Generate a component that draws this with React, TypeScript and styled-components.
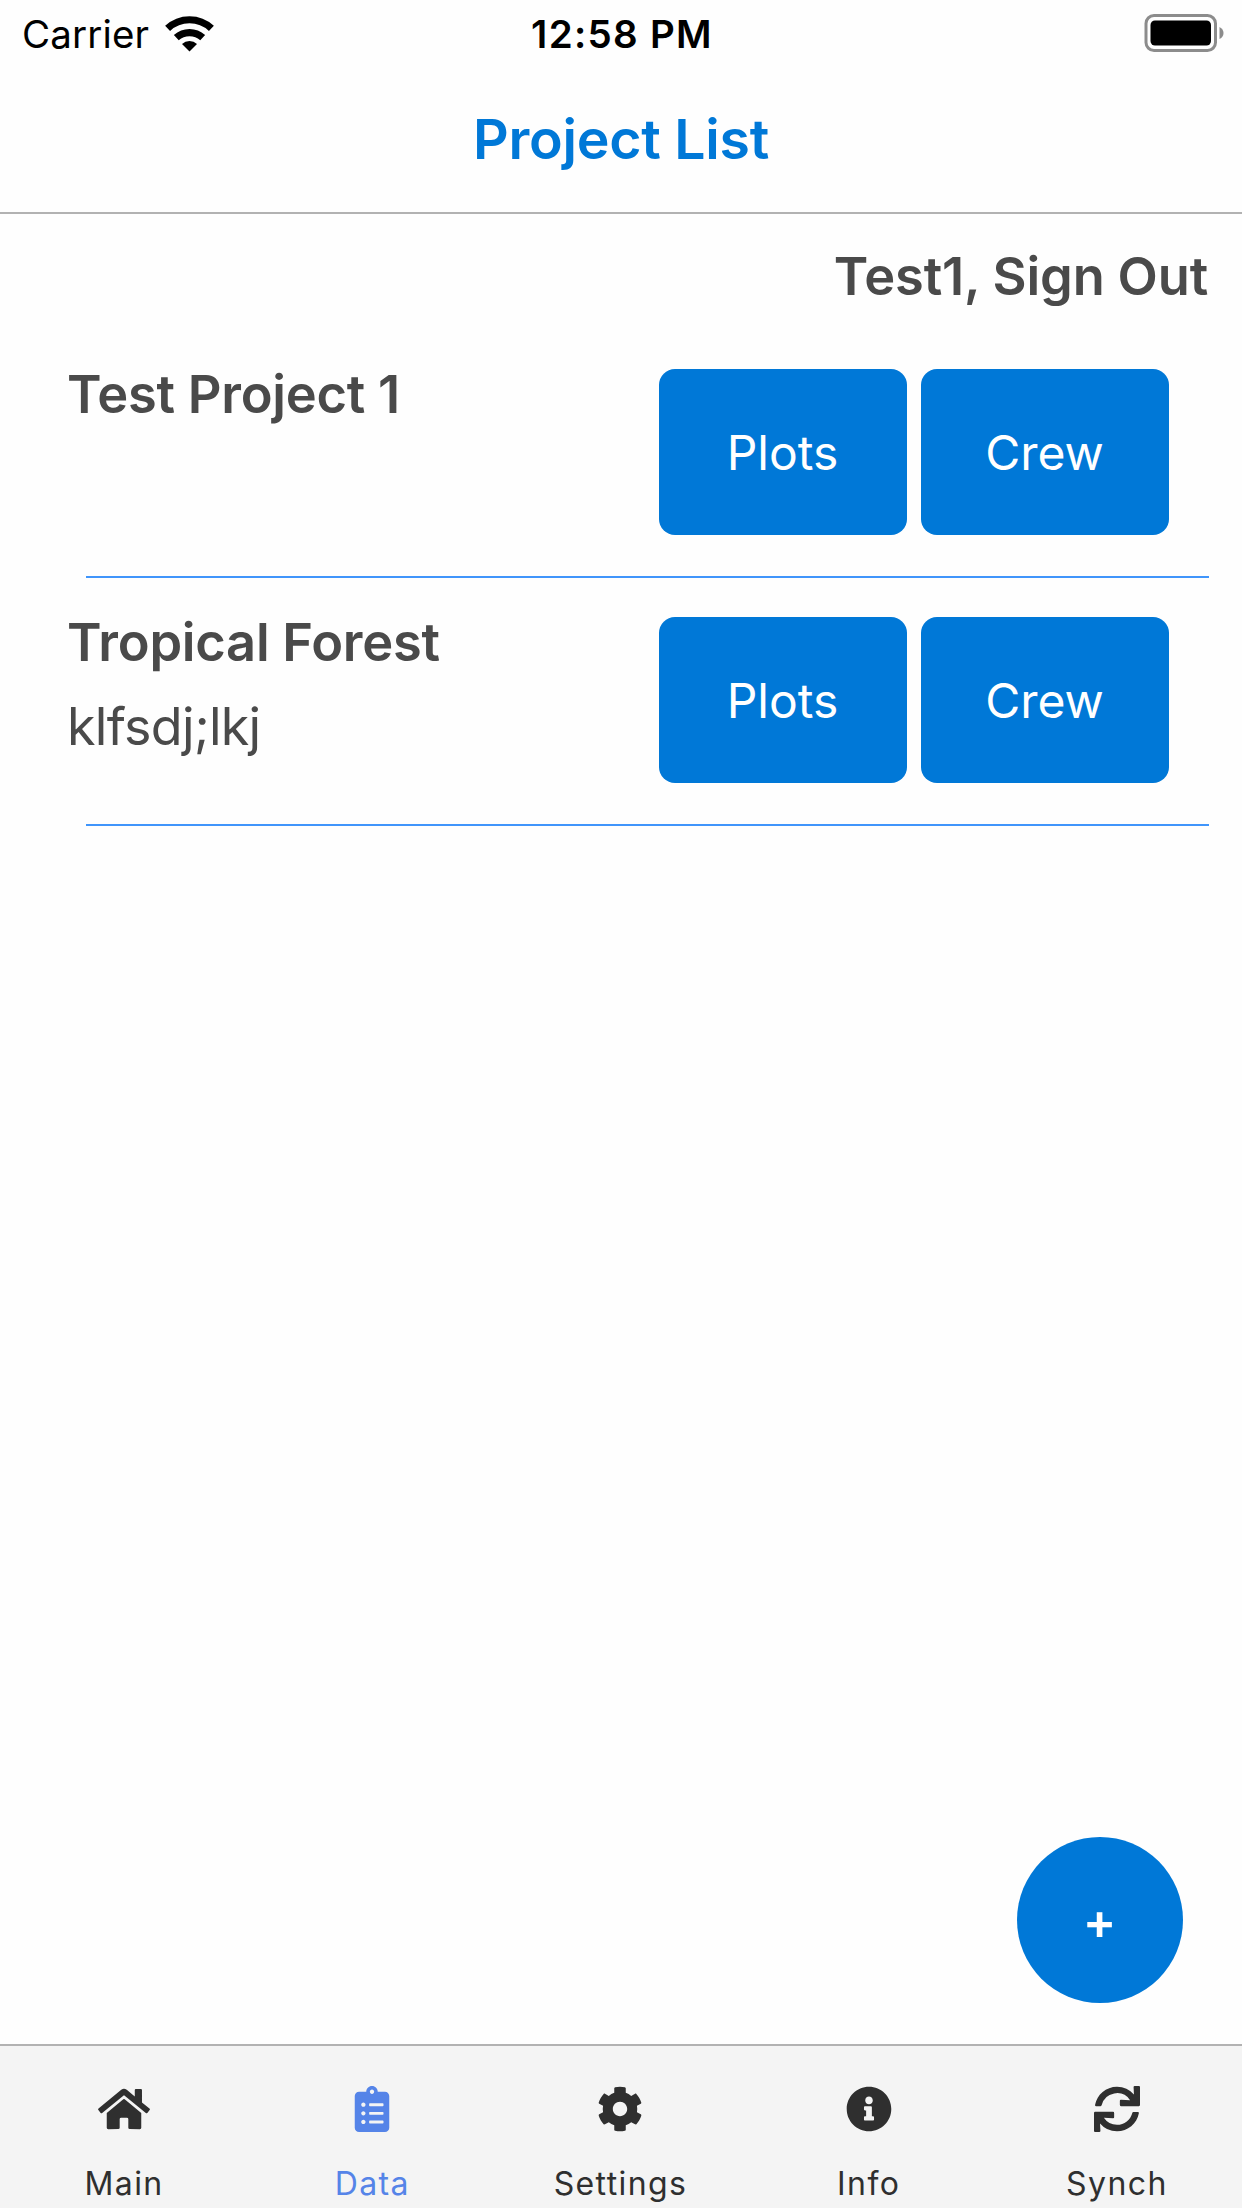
import React from "react";
import styled, { createGlobalStyle } from "styled-components";
import { FaHome, FaClipboardList, FaCog, FaInfoCircle, FaSync } from "react-icons/fa";

const GlobalStyle = createGlobalStyle`
  body { margin: 0; background: #fefefe; }
  * { box-sizing: border-box; }
  button { border: 0; padding: 0; font-family: inherit; }
`;

const Screen = styled.div`
  width: 1242px;
  height: 2208px;
  display: flex;
  flex-direction: column;
  background: #fefefe;
  color: #4a4a4a;
  font-family: Inter, "Liberation Sans", sans-serif;
  white-space: nowrap;
`;

const Header = styled.header`
  height: 214px;
  border-bottom: 2px solid #b2b2b2;
`;

const StatusBar = styled.div`
  height: 68px;
  display: grid;
  grid-template-columns: 1fr auto 1fr;
  align-items: center;
  padding: 0 18px 0 22px;
  color: #000;
  font-size: 38.5px;
  line-height: 68px;
`;

const Carrier = styled.div`
  display: flex;
  align-items: center;
  gap: 16px;
  letter-spacing: 0.15px;
`;

const Clock = styled.div`
  margin-right: 2px;
  font-weight: 600;
  letter-spacing: 1.3px;
`;

const BatterySlot = styled.div`
  display: flex;
  justify-content: flex-end;
  padding-bottom: 3px;
`;

const Title = styled.h1`
  margin: 0;
  color: #0078d7;
  font-size: 55.4px;
  font-weight: 600;
  line-height: 141px;
  letter-spacing: -0.25px;
  text-align: center;
`;

const Main = styled.main`
  flex: 1;
  display: flex;
  flex-direction: column;
`;

const UserBar = styled.div`
  height: 116px;
  padding: 8px 34px 0 0;
  font-size: 52.4px;
  font-weight: 600;
  line-height: 108px;
  letter-spacing: -0.15px;
  text-align: right;
`;

const Row = styled.section`
  height: 248px;
  display: flex;
  flex-direction: column;
  justify-content: space-between;
`;

const RowBody = styled.div`
  display: flex;
  justify-content: space-between;
  padding: 22px 73px 0 67px;
`;

const Divider = styled.hr`
  height: 2px;
  margin: 0 33px 0 86px;
  border: 0;
  background: #4095fb;
`;

const ProjectName = styled.h2`
  margin: 0;
  font-size: 52.4px;
  font-weight: 600;
  line-height: 85px;
  letter-spacing: -0.25px;
`;

const Description = styled.p`
  margin: 0;
  font-size: 52px;
  line-height: 83px;
  letter-spacing: -0.7px;
`;

const Actions = styled.div`
  display: flex;
  gap: 14px;
  padding-top: 17px;
`;

const ActionButton = styled.button`
  width: 248px;
  height: 166px;
  padding: 2px 1px 0 0;
  border-radius: 16px;
  background: #0078d7;
  color: #fff;
  font-size: 48px;
  line-height: 164px;
`;

const FabArea = styled.div`
  margin-top: auto;
  display: flex;
  justify-content: flex-end;
  padding: 0 59.5px 41px 0;
`;

const Fab = styled.button`
  width: 166px;
  height: 166px;
  display: grid;
  place-items: center;
  border-radius: 50%;
  background: #0078d7;
  color: #fff;
  font-size: 50px;
  font-weight: 600;
  padding-top: 1px;
`;

const TabBar = styled.nav`
  height: 164px;
  display: grid;
  grid-template-columns: repeat(5, 1fr);
  padding-right: 1px;
  border-top: 2px solid #b2b2b2;
  background: #f4f4f4;
`;

const Tab = styled.div<{ $active?: boolean }>`
  display: flex;
  flex-direction: column;
  align-items: center;
  gap: 30px;
  padding-top: 40px;
  color: ${(p) => (p.$active ? "#5584e8" : "#2f2f2f")};

  svg { width: 52px; height: 46px; }
`;

const TabLabel = styled.span`
  font-size: 32px;
  line-height: 44px;
  font-weight: 400;
  letter-spacing: 1.4px;
`;

const WifiIcon = () => (
  <svg width="49" height="36" viewBox="0 0 49 36" fill="none" stroke="#000">
    <path d="M2.6 12.4 A32 32 0 0 1 46.4 12.4" strokeWidth="7.2" />
    <path d="M11.3 21.7 A19.5 19.5 0 0 1 37.7 21.7" strokeWidth="7.2" />
    <path d="M24.5 35.5 L17 28 A11 11 0 0 1 32 28 Z" fill="#000" stroke="none" />
  </svg>
);

const BatteryIcon = () => (
  <svg width="80" height="38" viewBox="0 0 80 38">
    <rect x="2" y="1.5" width="69.5" height="35" rx="8" fill="none" stroke="#8c8c8c" strokeWidth="3" />
    <rect x="6.5" y="6.5" width="60.5" height="25" rx="4.5" fill="#000" />
    <path d="M75.5 13 Q79.5 15 79.5 19 Q79.5 23 75.5 25 Z" fill="#8c8c8c" />
  </svg>
);

const projects = [
  { name: "Test Project 1", description: "" },
  { name: "Tropical Forest", description: "klfsdj;lkj" },
];

const tabs = [
  { label: "Main", Icon: FaHome },
  { label: "Data", Icon: FaClipboardList, active: true },
  { label: "Settings", Icon: FaCog },
  { label: "Info", Icon: FaInfoCircle },
  { label: "Synch", Icon: FaSync },
];

export default function App() {
  return (
    <>
      <GlobalStyle />
      <Screen>
        <Header>
          <StatusBar>
            <Carrier>
              <span>Carrier</span>
              <WifiIcon />
            </Carrier>
            <Clock>12:58 PM</Clock>
            <BatterySlot>
              <BatteryIcon />
            </BatterySlot>
          </StatusBar>
          <Title>Project List</Title>
        </Header>
        <Main>
          <UserBar>Test1, Sign Out</UserBar>
          {projects.map((p) => (
            <Row key={p.name}>
              <RowBody>
                <div>
                  <ProjectName>{p.name}</ProjectName>
                  {p.description && <Description>{p.description}</Description>}
                </div>
                <Actions>
                  <ActionButton>Plots</ActionButton>
                  <ActionButton>Crew</ActionButton>
                </Actions>
              </RowBody>
              <Divider />
            </Row>
          ))}
          <FabArea>
            <Fab>+</Fab>
          </FabArea>
        </Main>
        <TabBar>
          {tabs.map(({ label, Icon, active }) => (
            <Tab key={label} $active={active}>
              <Icon />
              <TabLabel>{label}</TabLabel>
            </Tab>
          ))}
        </TabBar>
      </Screen>
    </>
  );
}
